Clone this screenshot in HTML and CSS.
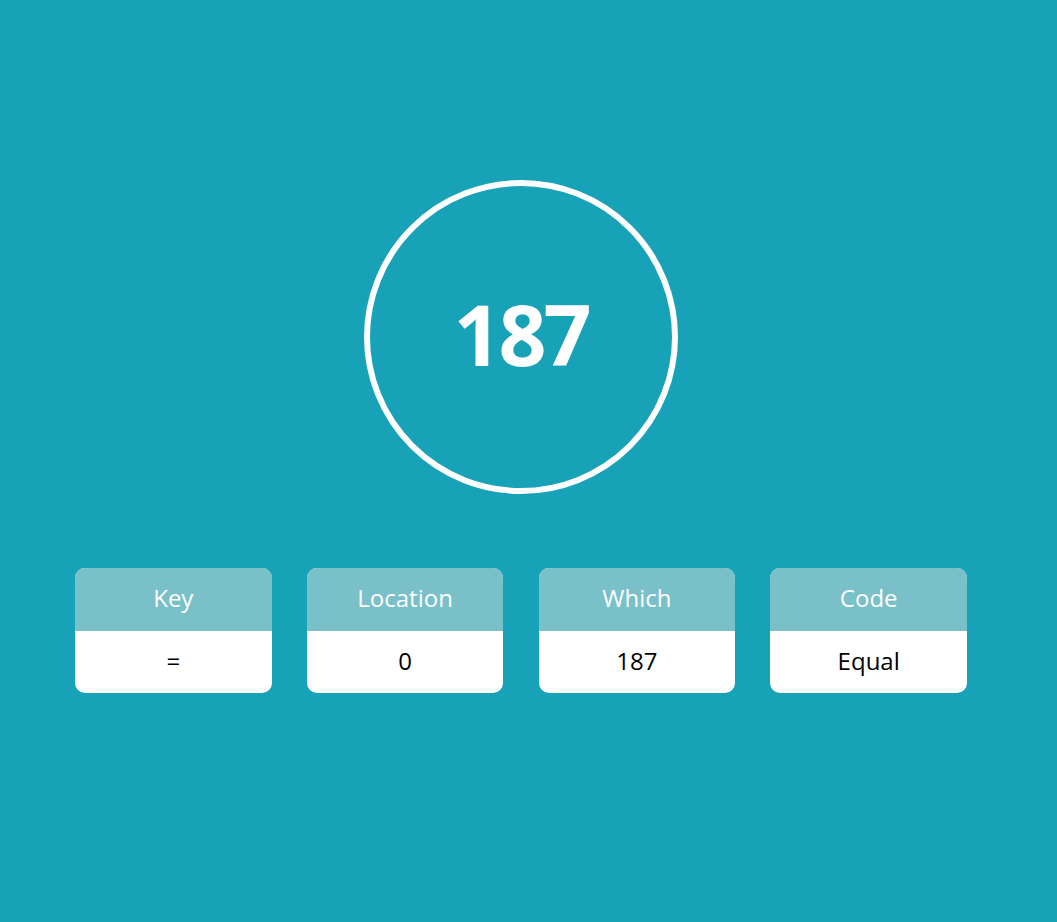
FILE: index.html
```html
<!DOCTYPE html>
<html lang="en">
<head>
<meta charset="utf-8">
<title>Key Codes</title>
<link rel="stylesheet" href="styles.css">
</head>
<body>
<main class="page">
  <div class="circle"><span class="big">187</span></div>
  <section class="cards">
    <div class="card"><div class="card-head">Key</div><div class="card-body">=</div></div>
    <div class="card"><div class="card-head">Location</div><div class="card-body">0</div></div>
    <div class="card"><div class="card-head">Which</div><div class="card-body">187</div></div>
    <div class="card"><div class="card-head">Code</div><div class="card-body">Equal</div></div>
  </section>
</main>
</body>
</html>
```
FILE: styles.css
```css
html, body {
  margin: 0;
  padding: 0;
  background: #18a2b8;
  font-family: "Open Sans", "Noto Sans", sans-serif;
}
.page {
  width: 1042px;
  min-height: 922px;
  box-sizing: border-box;
  padding-top: 180px;
  display: flex;
  flex-direction: column;
  align-items: center;
}
.circle {
  width: 314px;
  height: 314px;
  box-sizing: border-box;
  border: 6px solid #fff;
  border-radius: 50%;
  display: flex;
  align-items: center;
  justify-content: center;
  padding-bottom: 6px;
}
.big {
  color: #fff;
  font-weight: 700;
  font-size: 84px;
  line-height: 1;
  letter-spacing: -3px;
}
.cards {
  margin-top: 74px;
  display: flex;
  gap: 35.3px;
}
.card {
  width: 196.5px;
  border-radius: 10px;
  overflow: hidden;
  background: #fff;
}
.card-head {
  height: 63px;
  background: #79c0c9;
  color: #fff;
  font-size: 24px;
  display: flex;
  align-items: center;
  justify-content: center;
  padding-bottom: 4px;
  box-sizing: border-box;
}
.card-body {
  height: 62px;
  color: #000;
  font-size: 24px;
  display: flex;
  align-items: center;
  justify-content: center;
  padding-bottom: 3px;
  box-sizing: border-box;
}
```
